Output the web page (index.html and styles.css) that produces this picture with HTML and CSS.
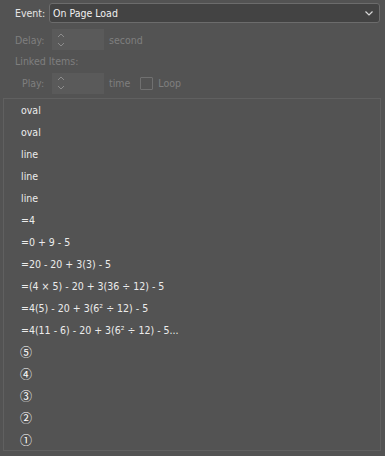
FILE: index.html
```html
<!DOCTYPE html>
<html>
<head>
<meta charset="utf-8">
<link rel="stylesheet" href="styles.css">
</head>
<body>
<div class="panel">
  <div class="row row-event">
    <span class="label">Event:</span>
    <div class="select">
      <span>On Page Load</span>
      <svg class="chev" width="8" height="5" viewBox="0 0 8 5"><path d="M0.5 0.5 L4 4 L7.5 0.5" fill="none" stroke="#d8d8d8" stroke-width="1.2"/></svg>
    </div>
  </div>
  <div class="row row-delay">
    <span class="label dim">Delay:</span>
    <div class="spin">
      <svg width="8" height="16" viewBox="0 0 8 16"><path d="M1 5 L4 2 L7 5 M1 11 L4 14 L7 11" fill="none" stroke="#8c8c8c" stroke-width="1"/></svg>
    </div>
    <span class="dim unit">second</span>
  </div>
  <div class="row row-linked">
    <span class="label dim">Linked Items:</span>
  </div>
  <div class="row row-play">
    <span class="label dim play">Play:</span>
    <div class="spin">
      <svg width="8" height="16" viewBox="0 0 8 16"><path d="M1 5 L4 2 L7 5 M1 11 L4 14 L7 11" fill="none" stroke="#8c8c8c" stroke-width="1"/></svg>
    </div>
    <span class="dim unit">time</span>
    <span class="check"></span>
    <span class="dim">Loop</span>
  </div>
  <ul class="list">
    <li>oval</li>
    <li>oval</li>
    <li>line</li>
    <li>line</li>
    <li>line</li>
    <li>=4</li>
    <li>=0 + 9 - 5</li>
    <li>=20 - 20 + 3(3) - 5</li>
    <li>=(4 × 5) - 20 + 3(36 ÷ 12) - 5</li>
    <li>=4(5) - 20 + 3(6² ÷ 12) - 5</li>
    <li>=4(11 - 6) - 20 + 3(6² ÷ 12) - 5...</li>
    <li class="circ">⑤</li>
    <li class="circ">④</li>
    <li class="circ">③</li>
    <li class="circ">②</li>
    <li class="circ">①</li>
  </ul>
</div>
</body>
</html>
```
FILE: styles.css
```css
html, body {
  margin: 0;
  padding: 0;
  background: #535353;
}
body {
  font-family: "DejaVu Sans Condensed", "DejaVu Sans", sans-serif;
  font-stretch: condensed;
  font-size: 10.5px;
  color: #e6e6e6;
  width: 385px;
  height: 456px;
  overflow: hidden;
}
.panel {
  padding-top: 3px;
}
.row {
  display: flex;
  align-items: center;
  padding-left: 15px;
}
.label {
  white-space: nowrap;
}
.dim {
  color: #7f7f7f;
}
.row-event {
  height: 20px;
  padding-right: 5px;
}
.row-event .label {
  width: 34px;
}
.select {
  flex: 1;
  height: 20px;
  box-sizing: border-box;
  background: #434343;
  border: 1px solid #6c6c6c;
  border-radius: 3px;
  display: flex;
  align-items: center;
  justify-content: space-between;
  padding: 0 6px 0 3px;
  color: #f0f0f0;
}
.row-delay {
  margin-top: 6px;
  height: 21px;
}
.row-delay .label {
  width: 37px;
}
.spin {
  width: 52px;
  height: 21px;
  background: #5a5a5a;
  display: flex;
  align-items: center;
  padding-left: 5px;
  box-sizing: border-box;
}
.unit {
  margin-left: 5px;
}
.row-linked {
  height: 22px;
}
.row-play {
  height: 22px;
  padding-left: 22px;
}
.row-play .label {
  width: 30px;
}
.check {
  width: 11px;
  height: 11px;
  border: 1px solid #707070;
  border-radius: 1px;
  margin-left: 10px;
  margin-right: 5px;
}
.list {
  list-style: none;
  margin: 4px 4px 0 3px;
  padding: 0;
  height: 353px;
  box-sizing: border-box;
  border: 1px solid #606060;
  overflow: hidden;
}
.list li {
  height: 22px;
  line-height: 22px;
  padding-left: 17px;
  color: #ececec;
  white-space: nowrap;
}
.list li.circ {
  font-family: "Noto Sans CJK SC", "DejaVu Sans", sans-serif;
  font-size: 12px;
  color: #ffffff;
  padding-left: 16px;
}
```
